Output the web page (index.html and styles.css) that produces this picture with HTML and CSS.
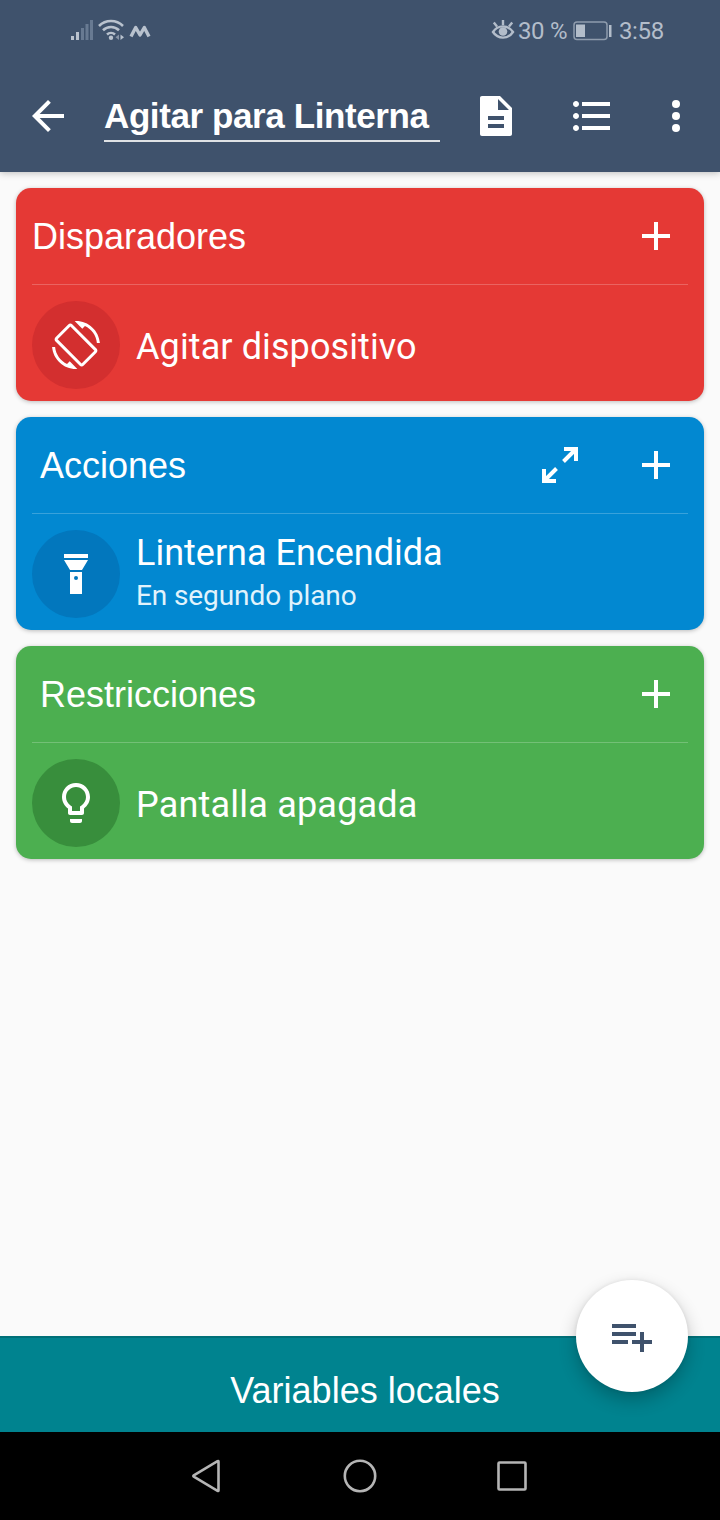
FILE: index.html
```
<!DOCTYPE html>
<html lang="es">

<head>
    <meta charset="UTF-8">
    <meta name="viewport" content="width=device-width, initial-scale=1.0">
    <title>Agitar para Linterna</title>
    <link rel="stylesheet" href="styles.css">
</head>

<body>
    <div class="screen">
        <header class="header">
            <div class="status-bar">
                <svg class="status-left" width="84" height="24" viewBox="0 0 84 24">
                    <path fill="#b9c2ce" d="M1 17h3v4H1zM6 13h3v8H6z" />
                    <path fill="#687a92" d="M11 9h3v12h-3zM15.500 5h3v16h-3zM20 1h3v20h-3z" />
                    <g fill="none" stroke="#b9c2ce" stroke-width="2.600">
                        <path d="M29 7a17 17 0 0 1 24 0" />
                        <path d="M33 11.300a11.500 11.500 0 0 1 16 0" />
                        <path d="M37 15.500a6 6 0 0 1 8 0" />
                    </g>
                    <circle cx="41" cy="18.700" r="2.200" fill="#b9c2ce" />
                    <path fill="#8794a7" d="M49 15.500v5.500l-3.500-2.700z" />
                    <path fill="#b9c2ce" d="M50.500 15.500v5.500l3.500-2.700z" />
                    <path fill="none" stroke="#b9c2ce" stroke-width="3.400" stroke-linejoin="round" d="M61 17.500l4.700-9 4.300 7.500 4.300-7.500 4.700 9" />
                </svg>
                <div class="status-right">
                    <svg width="24" height="22" viewBox="0 0 24 22">
                        <path fill="none" stroke="#b3bdca" stroke-width="2.400" d="M2 13c5-7.500 15-7.500 20 0-5 7.500-15 7.500-20 0zM12 6V1M6 7.500L2.800 3.500M18 7.500l3.200-4" />
                        <circle cx="12" cy="12.500" r="4.300" fill="#b3bdca" />
                    </svg>
                    <span class="percent">30 %</span>
                    <svg class="battery" width="39" height="20" viewBox="0 0 39 20">
                        <rect x="1" y="1" width="33" height="17.500" rx="3" fill="none" stroke="#8f9cad" stroke-width="1.500" />
                        <path fill="#b3bdca" d="M3 3.500h9v12.500H3zM36 4h2.500v12H36z" />
                    </svg>
                    <span class="clock">3:58</span>
                </div>
            </div>
            <div class="toolbar">
                <svg class="icon" viewBox="0 0 24 24">
                    <path d="M20 11H7.830l5.590-5.590L12 4l-8 8 8 8 1.410-1.410L7.830 13H20v-2z" />
                </svg>
                <h1 class="title">Agitar para Linterna</h1>
                <svg class="icon icon-doc" viewBox="0 0 24 24">
                    <path d="M14 2H5c-.6 0-1 .4-1 1v18c0 .6.400 1 1 1h14c.6 0 1-.4 1-1V8l-6-6zm2 16H8v-2h8v2zm0-4H8v-2h8v2zm-3-5V3.500L18.500 9H13z" />
                </svg>
                <svg class="icon icon-list" viewBox="0 0 24 24">
                    <path d="M4 10.500c-.83 0-1.500.67-1.500 1.500s.67 1.500 1.500 1.500 1.500-.67 1.500-1.500-.67-1.500-1.500-1.500zm0-6c-.83 0-1.500.67-1.500 1.500S3.170 7.500 4 7.500 5.500 6.830 5.500 6 4.830 4.500 4 4.500zm0 12c-.83 0-1.500.68-1.500 1.500s.68 1.500 1.500 1.500 1.500-.68 1.500-1.500-.67-1.500-1.500-1.500zM7 19h14v-2H7v2zm0-6h14v-2H7v2zm0-8v2h14V5H7z" />
                </svg>
                <svg class="icon icon-more" viewBox="0 0 24 24">
                    <circle cx="12" cy="6" r="2" />
                    <circle cx="12" cy="12" r="2" />
                    <circle cx="12" cy="18" r="2" />
                </svg>
            </div>
        </header>

        <main class="content">
            <section class="card triggers">
                <div class="card-header">
                    <h2>Disparadores</h2>
                    <svg class="icon" viewBox="0 0 24 24">
                        <path d="M19 13h-6v6h-2v-6H5v-2h6V5h2v6h6v2z" />
                    </svg>
                </div>
                <div class="card-row">
                    <div class="circle">
                        <svg class="icon" viewBox="0 0 24 24">
                            <path d="M16.480 2.520c3.270 1.550 5.610 4.720 5.970 8.480h1.500C23.440 4.840 18.290 0 12 0l-.66.03 3.810 3.810 1.330-1.320zm-6.250-.77c-.59-.59-1.540-.59-2.120 0L1.750 8.110c-.59.59-.59 1.540 0 2.120l12.020 12.020c.59.59 1.540.59 2.120 0l6.360-6.360c.59-.59.59-1.540 0-2.120L10.230 1.750zm4.600 19.440L2.810 9.170l6.360-6.360 12.020 12.020-6.360 6.360zm-7.310.29C4.250 19.940 1.910 16.760 1.550 13H.05C.56 19.160 5.710 24 12 24l.66-.03-3.810-3.810-1.330 1.320z" />
                        </svg>
                    </div>
                    <div class="text">
                        <p class="name">Agitar dispositivo</p>
                    </div>
                </div>
            </section>

            <section class="card actions">
                <div class="card-header">
                    <h2>Acciones</h2>
                    <svg class="icon icon-expand" viewBox="0 0 48 48">
                        <path d="M28 8h12v12M39 9L27.500 20.500M8 28v12h12M9 39l11.500-11.500" />
                    </svg>
                    <svg class="icon" viewBox="0 0 24 24">
                        <path d="M19 13h-6v6h-2v-6H5v-2h6V5h2v6h6v2z" />
                    </svg>
                </div>
                <div class="card-row">
                    <div class="circle">
                        <svg class="icon" viewBox="0 0 24 24">
                            <path fill-rule="evenodd" d="M6 2h12v2H6zM6 5h12l-3 5H9zM9 11h6v11H9zM12 13a1 1 0 1 0 0 2 1 1 0 0 0 0-2z" />
                        </svg>
                    </div>
                    <div class="text">
                        <p class="name">Linterna Encendida</p>
                        <p class="detail">En segundo plano</p>
                    </div>
                </div>
            </section>

            <section class="card constraints">
                <div class="card-header">
                    <h2>Restricciones</h2>
                    <svg class="icon" viewBox="0 0 24 24">
                        <path d="M19 13h-6v6h-2v-6H5v-2h6V5h2v6h6v2z" />
                    </svg>
                </div>
                <div class="card-row">
                    <div class="circle">
                        <svg class="icon" viewBox="0 0 24 24">
                            <path d="M9 21c0 .5.400 1 1 1h4c.6 0 1-.5 1-1v-1H9v1zm3-19C8.100 2 5 5.100 5 9c0 2.400 1.200 4.500 3 5.700V17c0 .5.400 1 1 1h6c.6 0 1-.5 1-1v-2.300c1.800-1.300 3-3.400 3-5.700 0-3.900-3.100-7-7-7zm2.900 11.100l-.9.6V16h-4v-2.300l-.9-.6C7.800 12.200 7 10.600 7 9c0-2.800 2.200-5 5-5s5 2.200 5 5c0 1.600-.8 3.200-2.100 4.100z" />
                        </svg>
                    </div>
                    <div class="text">
                        <p class="name">Pantalla apagada</p>
                    </div>
                </div>
            </section>
        </main>

        <footer class="locals">
            <span>Variables locales</span>
            <div class="fab">
                <svg class="icon" viewBox="0 0 24 24">
                    <path d="M14 10H2v2h12v-2zm0-4H2v2h12V6zm4 8v-4h-2v4h-4v2h4v4h2v-4h4v-2h-4zM2 16h8v-2H2v2z" />
                </svg>
            </div>
        </footer>

        <nav class="nav-bar">
            <svg viewBox="0 0 40 40">
                <path d="M30.500 5.500v29c0 .5-.5.500-1 .3L5.800 20.700c-.6-.4-.6-1 0-1.400L29.500 5.200c.5-.2 1-.2 1 .3z" />
            </svg>
            <svg viewBox="0 0 40 40">
                <circle cx="20" cy="20" r="15.200" />
            </svg>
            <svg viewBox="0 0 40 40">
                <rect x="6.500" y="6.500" width="27" height="27" rx="1" />
            </svg>
        </nav>
    </div>
</body>

</html>
```

FILE: styles.css
```
* {
    box-sizing: border-box;
    margin: 0;
    padding: 0;
}

body {
    font-family: "Liberation Sans", Arial, sans-serif;
    background: #fafafa;
    color: #fff;
}

.screen {
    display: flex;
    flex-direction: column;
    width: 720px;
    height: 1520px;
    overflow: hidden;
}

.icon {
    display: block;
    flex: none;
    width: 48px;
    height: 48px;
    fill: #fff;
}

.header {
    height: 172px;
    background: #3f526c;
    box-shadow: 0 1px 7px rgba(0, 0, 0, 0.25);
}

.status-bar {
    display: flex;
    justify-content: space-between;
    height: 60px;
    padding: 19px 56px 0 70px;
}

.status-right {
    display: flex;
    align-items: flex-start;
    font-family: Roboto, sans-serif;
    font-size: 24px;
    line-height: 24px;
    color: #b3bdca;
}

.percent {
    width: 50px;
    margin-left: 3px;
    letter-spacing: -0.3px;
    white-space: nowrap;
}

.battery {
    margin: 2px 7px 0 5px;
}

.clock {
    letter-spacing: -0.3px;
}

.toolbar {
    display: flex;
    align-items: center;
    height: 112px;
    padding-left: 24px;
}

.title {
    width: 336px;
    height: 52px;
    margin-left: 32px;
    border-bottom: 2px solid #dfe2e5;
    font-size: 35px;
    letter-spacing: -0.4px;
    line-height: 52px;
    white-space: nowrap;
}

.icon-doc {
    margin-left: 32px;
}

.icon-list {
    margin-left: 48px;
}

.icon-more {
    margin-left: 36px;
}

.content {
    display: flex;
    flex: 1;
    flex-direction: column;
    gap: 16px;
    padding: 16px;
}

.card {
    height: 213px;
    padding: 0 16px;
    border-radius: 15px;
    box-shadow: 0 1px 4px rgba(0, 0, 0, 0.25);
}

.card-header {
    display: flex;
    align-items: center;
    height: 97px;
    padding: 0 8px 1px;
    border-bottom: 1px solid rgba(255, 255, 255, 0.22);
}

.card-header h2 {
    flex: 1;
    padding-top: 2px;
    font-size: 36px;
    font-weight: normal;
    line-height: 48px;
}

.triggers .card-header {
    padding-left: 0;
}

.icon-expand {
    margin-right: 48px;
    fill: none;
    stroke: #fff;
    stroke-width: 4;
}

.card-row {
    display: flex;
    gap: 16px;
    padding-top: 16px;
}

.circle {
    display: flex;
    align-items: center;
    justify-content: center;
    width: 88px;
    height: 88px;
    border-radius: 50%;
}

.text {
    display: flex;
    flex-direction: column;
    justify-content: center;
    height: 92px;
    font-family: Roboto, sans-serif;
}

.name {
    font-size: 36px;
    letter-spacing: 0.1px;
    line-height: 44px;
}

.detail {
    font-size: 28px;
    letter-spacing: -0.1px;
    line-height: 42px;
    color: #e1f3fc;
}

.triggers {
    background: #e53935;
}

.triggers .circle {
    background: #d32f2f;
}

.actions {
    background: #0288d1;
}

.actions .circle {
    background: #0277bd;
}

.actions .text {
    height: 88px;
}

.actions .name {
    letter-spacing: 0;
}

.constraints {
    background: #4caf50;
}

.constraints .circle {
    background: #388e3c;
}

.constraints .name {
    letter-spacing: 0.2px;
}

.locals {
    position: relative;
    display: flex;
    align-items: center;
    justify-content: center;
    height: 96px;
    padding: 12px 0 0 10px;
    border-top: 2px solid #007078;
    background: #00838f;
    font-size: 36px;
}

/* floats over the top edge of the bar */
.fab {
    position: absolute;
    top: -58px;
    right: 32px;
    display: flex;
    align-items: center;
    justify-content: center;
    width: 112px;
    height: 112px;
    border-radius: 50%;
    background: #fff;
    box-shadow: 0 8px 18px rgba(0, 0, 0, 0.24), 0 0 4px rgba(0, 0, 0, 0.08);
}

.fab .icon {
    fill: #3f526c;
}

.nav-bar {
    display: flex;
    align-items: center;
    justify-content: center;
    gap: 112px;
    height: 88px;
    background: #000;
}

.nav-bar svg {
    width: 40px;
    height: 40px;
    fill: none;
    stroke: #b5b5b5;
    stroke-width: 2.6;
}
```
